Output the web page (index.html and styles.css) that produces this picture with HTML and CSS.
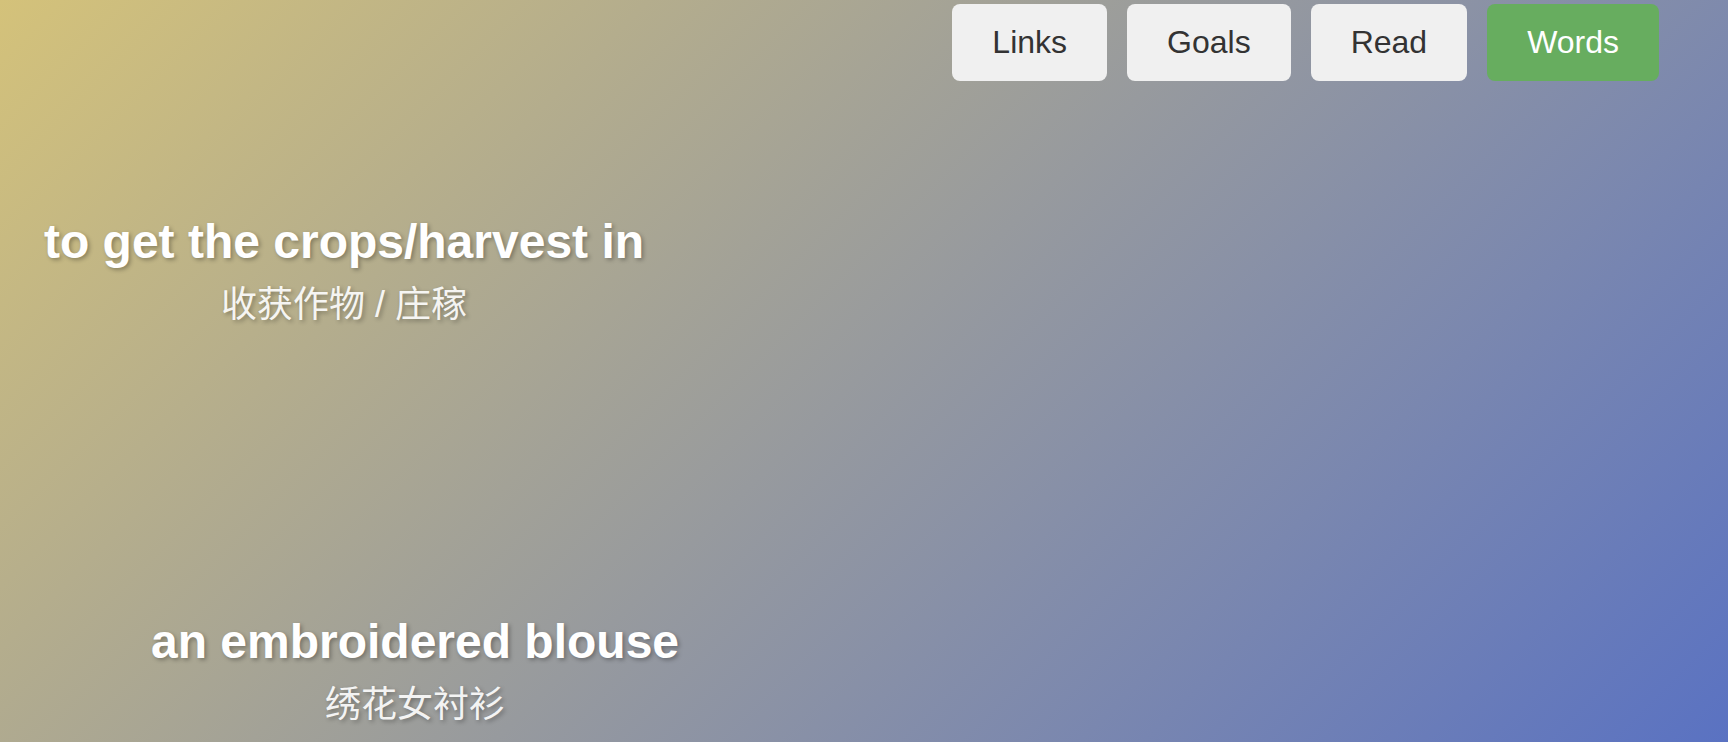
FILE: index.html
```html
<!DOCTYPE html>
<html lang="en">
<head>
<meta charset="utf-8">
<title>Words</title>
<link rel="stylesheet" href="styles.css">
</head>
<body>
<div class="page">
  <nav class="nav">
    <button class="nav-btn">Links</button>
    <button class="nav-btn">Goals</button>
    <button class="nav-btn">Read</button>
    <button class="nav-btn active">Words</button>
  </nav>
  <main class="canvas">
    <div class="word" style="left:344px; top:214px;">
      <div class="word-en">to get the crops/harvest in</div>
      <div class="word-zh">收获作物 / 庄稼</div>
    </div>
    <div class="word" style="left:415px; top:614px;">
      <div class="word-en">an embroidered blouse</div>
      <div class="word-zh">绣花女衬衫</div>
    </div>
  </main>
</div>
</body>
</html>
```

FILE: styles.css
```css
html, body {
  margin: 0;
  padding: 0;
  height: 100%;
}

body {
  font-family: "Liberation Sans", Arial, "Noto Sans CJK SC", sans-serif;
  background: linear-gradient(135deg, #d4c27a 0%, #5a72c2 100%);
  overflow: hidden;
}

.page {
  position: relative;
  width: 100%;
  height: 742px;
}

.nav {
  display: flex;
  justify-content: flex-end;
  gap: 20px;
  padding: 4px 69px 0 0;
}

.nav-btn {
  font-family: "Liberation Sans", Arial, sans-serif;
  font-size: 32px;
  line-height: 37px;
  padding: 20px 40px;
  border: none;
  border-radius: 8px;
  background: #f0f0f0;
  color: #333333;
  cursor: pointer;
  margin: 0;
}

.nav-btn.active {
  background: #67ad5f;
  color: #ffffff;
}

.canvas {
  position: absolute;
  inset: 0;
  pointer-events: none;
}

.word {
  position: absolute;
  transform: translateX(-50%);
  text-align: center;
  white-space: nowrap;
  color: #ffffff;
  text-shadow: 2px 2px 4px rgba(0, 0, 0, 0.3);
}

.word-en {
  font-family: "Liberation Sans", Arial, sans-serif;
  font-weight: bold;
  font-size: 48px;
  line-height: 55px;
}

.word-zh {
  font-family: "Liberation Sans", "Noto Sans CJK SC", sans-serif;
  font-size: 36px;
  line-height: 52px;
  margin-top: 10px;
  color: rgba(255, 255, 255, 0.92);
}
```
